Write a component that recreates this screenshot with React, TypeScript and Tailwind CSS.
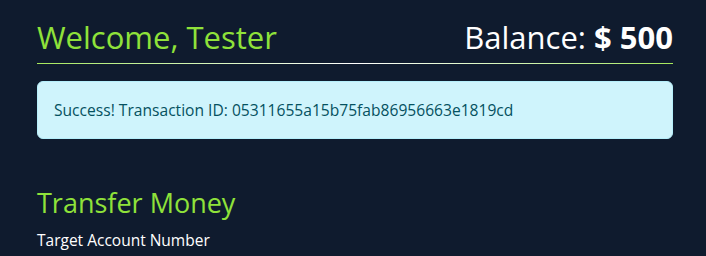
import React from 'react';

const App: React.FC = () => {
  const txId = '05311655a15b75fab86956663e1819cd';

  return (
    <div className="min-h-[256px] bg-[#0f1b2e] pl-[37px] pr-[33px] pt-[18px] font-['Open_Sans',sans-serif] text-white">
      {/* Header */}
      <div className="flex items-end justify-between pb-[7px]">
        <h1 className="text-[31px] leading-[38px] text-[#8fe23a]">Welcome, Tester</h1>
        <h2 className="text-[31px] leading-[38px] text-white">
          Balance: <span className="font-bold">$ 500</span>
        </h2>
      </div>
      <div className="h-px bg-gradient-to-r from-[#a6e85a] via-white to-[#a6e85a]" />

      {/* Alert */}
      <div className="mt-[17px] flex h-[58px] items-center rounded-md border border-[#b6effb] bg-[#cff4fc] px-[16px] pt-[2px] text-[15.6px] text-[#055160]">
        Success! Transaction ID: {txId}
      </div>

      {/* Transfer form */}
      <h3 className="mt-[47px] text-[27px] leading-[34px] text-[#8fe23a]">Transfer Money</h3>
      <label className="mt-[9px] block text-[15.5px] font-medium text-white">Target Account Number</label>
    </div>
  );
};

export default App;
